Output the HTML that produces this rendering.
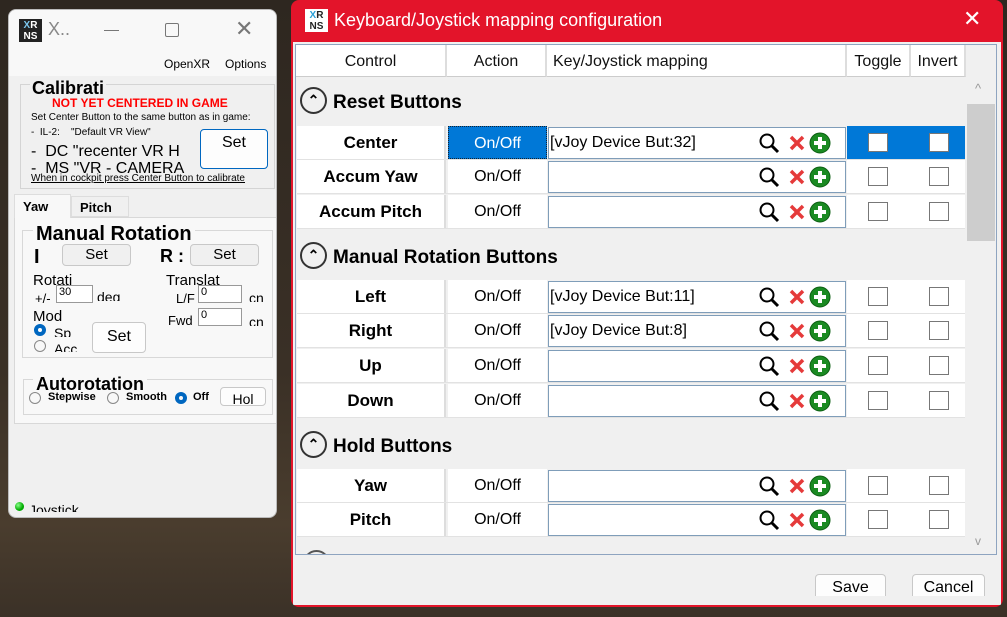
<!DOCTYPE html>
<html><head><meta charset="utf-8"><style>
*{margin:0;padding:0;box-sizing:border-box}
body{width:1007px;height:617px;overflow:hidden;position:relative;font-family:"Liberation Sans",sans-serif;background:linear-gradient(#2e2720 0%,#3a3026 60%,#4a3d2e 85%,#3b3127 100%)}
.a{position:absolute}
#lw{left:8px;top:9px;width:269px;height:509px;background:#f0f0f0;border-radius:8px;overflow:hidden;border:1px solid #bbb}
#dlg{left:291px;top:0;width:712px;height:607px;background:#e3142a;border-radius:8px;overflow:hidden}
#dc{left:2px;top:42px;width:708px;height:563px;background:#f0f0f0}
#grid{left:295px;top:44px;width:702px;height:511px;border:1px solid #8ea4c0;background:#f0f0f0;overflow:hidden}
.hd{position:absolute;top:0;height:32px;background:#fff;border-right:2px solid #ddd;border-bottom:1px solid #ccc;font-size:16px;line-height:33px;color:#111}
.row{position:absolute;left:1px;width:668px;height:34px}
.c1{position:absolute;left:0;top:0;width:149px;height:33px;background:#fff;border-right:2px solid #ddd;font-weight:bold;font-size:17px;text-align:center;line-height:33px}
.c2{position:absolute;left:151px;top:0;width:99px;height:33px;background:#fff;font-size:16px;text-align:center;line-height:33px}
.c3{position:absolute;left:251px;top:1px;width:298px;height:32px;background:#fff;border:1px solid #7f9db9;font-size:16px;line-height:30px;padding-left:1px}
.c4{position:absolute;left:550px;top:0;width:118px;height:33px;background:#fff}
.row::after{content:"";position:absolute;left:0;top:33px;width:668px;height:1px;background:#e2e2e2}
.cb{position:absolute;top:7px;width:20px;height:19px;border:1px solid #777;background:#fff}
.ic{position:absolute;left:209px;top:3px}
.sec{position:absolute;left:4px;font-size:19px;font-weight:bold;height:30px;line-height:30px}
.sec .ci{display:inline-block;width:27px;height:27px;border:2px solid #333;border-radius:50%;vertical-align:middle;margin-right:6px;text-align:center;line-height:22px;font-size:14px;position:relative;top:-2px}
.btn{position:absolute;background:#fdfdfd;border:1px solid #c8c8c8;border-radius:4px;text-align:center;font-size:16px}
</style></head><body>

<!-- left window -->
<div id="lw" class="a">
 <div class="a" style="left:0;top:0;width:269px;height:42px;background:#f8f8f8"></div>
 <div class="a" style="left:10px;top:9px;width:23px;height:23px;background:#222;font-size:10px;font-weight:bold;line-height:11px;color:#fff;text-align:center;padding-top:1px"><span style="color:#7cc7ee">X</span>R<br>NS</div>
 <div class="a" style="left:39px;top:9px;font-size:18px;color:#888">X..</div>
 <div class="a" style="left:95px;top:20px;width:15px;height:1px;background:#777"></div>
 <div class="a" style="left:156px;top:13px;width:14px;height:14px;border:1px solid #777;border-radius:2px"></div>
 <div class="a" style="left:226px;top:6px;font-size:22px;color:#777">✕</div>
 <div class="a" style="left:0;top:42px;width:269px;height:24px;background:#f8f8f8"></div>
 <div class="a" style="left:155px;top:47px;font-size:12px">OpenXR</div>
 <div class="a" style="left:216px;top:47px;font-size:12px">Options</div>
 <div class="a" style="left:11px;top:74px;width:255px;height:105px;border:1px solid #d4d4d4"></div>
 <div class="a" style="left:21px;top:68px;font-size:18px;font-weight:bold;height:17px;overflow:hidden;background:#f0f0f0;padding:0 2px">Calibrati</div>
 <div class="a" style="left:43px;top:86px;font-size:12px;font-weight:bold;color:#f00">NOT YET CENTERED IN GAME</div>
 <div class="a" style="left:22px;top:102px;font-size:10px">Set Center Button to the same button as in game:</div>
 <div class="a" style="left:22px;top:117px;font-size:10px">-&nbsp; IL-2:&nbsp;&nbsp;&nbsp; "Default VR View"</div>
 <div class="a" style="left:22px;top:133px;font-size:16px;height:14px;overflow:hidden;width:170px;white-space:nowrap">-&nbsp; DC "recenter VR H</div>
 <div class="a" style="left:22px;top:150px;font-size:16px;height:14px;overflow:hidden;width:170px;white-space:nowrap">-&nbsp; MS "VR - CAMERA</div>
 <div class="btn" style="left:191px;top:119px;width:68px;height:40px;border-color:#0067c0;line-height:26px">Set</div>
 <div class="a" style="left:22px;top:163px;font-size:10px;text-decoration:underline">When in cockpit press Center Button to calibrate</div>
 <div class="a" style="left:5px;top:207px;width:264px;height:207px;border:1px solid #d8d8d8;background:#f8f8f8"></div>
 <div class="a" style="left:5px;top:184px;width:57px;height:24px;background:#f8f8f8;border:1px solid #ddd;border-bottom:none;font-size:13px;font-weight:bold;padding:4px 0 0 8px">Yaw</div>
 <div class="a" style="left:62px;top:186px;width:58px;height:21px;border:1px solid #ddd;font-size:13px;font-weight:bold;padding:3px 0 0 8px">Pitch</div>
 <div class="a" style="left:13px;top:220px;width:251px;height:128px;border:1px solid #d8d8d8"></div>
 <div class="a" style="left:24px;top:213px;font-size:20px;font-weight:bold;background:#f8f8f8;padding:0 3px;height:20px;line-height:22px">Manual Rotation</div>
 <div class="a" style="left:25px;top:236px;font-size:20px;font-weight:bold;height:20px">I</div>
 <div class="btn" style="left:53px;top:234px;width:69px;height:22px;background:#f0f0f0;line-height:20px;font-size:15px">Set</div>
 <div class="a" style="left:151px;top:236px;font-size:18px;font-weight:bold">R :</div>
 <div class="btn" style="left:181px;top:234px;width:69px;height:22px;background:#f0f0f0;line-height:20px;font-size:15px">Set</div>
 <div class="a" style="left:24px;top:262px;font-size:15px;height:13px;overflow:hidden">Rotati</div>
 <div class="a" style="left:157px;top:262px;font-size:15px;height:13px;overflow:hidden">Translat</div>
 <div class="a" style="left:26px;top:281px;font-size:13px">+/-</div>
 <div class="a" style="left:47px;top:275px;width:37px;height:18px;background:#fff;border:1px solid #999;font-size:11px;padding-left:2px">30</div>
 <div class="a" style="left:88px;top:279px;font-size:14px;height:12px;overflow:hidden">deg</div>
 <div class="a" style="left:167px;top:281px;font-size:13px">L/F</div>
 <div class="a" style="left:189px;top:275px;width:44px;height:18px;background:#fff;border:1px solid #999;font-size:11px;padding-left:2px">0</div>
 <div class="a" style="left:240px;top:280px;font-size:14px;height:12px;overflow:hidden">cn</div>
 <div class="a" style="left:159px;top:303px;font-size:13px">Fwd</div>
 <div class="a" style="left:189px;top:298px;width:44px;height:18px;background:#fff;border:1px solid #999;font-size:11px;padding-left:2px">0</div>
 <div class="a" style="left:240px;top:304px;font-size:14px;height:12px;overflow:hidden">cn</div>
 <div class="a" style="left:24px;top:298px;font-size:15px;height:13px;overflow:hidden">Mod</div>
 <div class="a" style="left:25px;top:314px;width:12px;height:12px;border-radius:50%;border:4px solid #0067c0;background:#fff"></div>
 <div class="a" style="left:45px;top:315px;font-size:14px;height:12px;overflow:hidden">Sp</div>
 <div class="a" style="left:25px;top:330px;width:12px;height:12px;border-radius:50%;border:1px solid #888"></div>
 <div class="a" style="left:45px;top:331px;font-size:14px;height:11px;overflow:hidden">Acc</div>
 <div class="btn" style="left:83px;top:312px;width:54px;height:31px;line-height:28px">Set</div>
 <div class="a" style="left:14px;top:369px;width:250px;height:36px;border:1px solid #d8d8d8"></div>
 <div class="a" style="left:24px;top:364px;font-size:18px;font-weight:bold;background:#f8f8f8;padding:0 3px;height:18px;line-height:20px">Autorotation</div>
 <div class="a" style="left:20px;top:382px;width:12px;height:12px;border-radius:50%;border:1px solid #888"></div>
 <div class="a" style="left:39px;top:381px;font-size:11px;font-weight:bold">Stepwise</div>
 <div class="a" style="left:98px;top:382px;width:12px;height:12px;border-radius:50%;border:1px solid #888"></div>
 <div class="a" style="left:117px;top:381px;font-size:11px;font-weight:bold">Smooth</div>
 <div class="a" style="left:166px;top:382px;width:12px;height:12px;border-radius:50%;border:4px solid #0067c0"></div>
 <div class="a" style="left:184px;top:381px;font-size:11px;font-weight:bold">Off</div>
 <div class="btn" style="left:211px;top:377px;width:46px;height:19px;font-size:14px;line-height:22px;overflow:hidden">Hol</div>
 <div class="a" style="left:6px;top:492px;width:9px;height:9px;border-radius:50%;background:radial-gradient(circle at 35% 35%,#8f8,#0a0 60%)"></div>
 <div class="a" style="left:20px;top:492px;font-size:14px;height:10px;overflow:hidden">Joystick</div>
</div>

<!-- dialog -->
<div id="dlg" class="a">
 <div class="a" style="left:14px;top:9px;width:23px;height:23px;background:#fff;font-size:10px;font-weight:bold;line-height:11px;color:#222;text-align:center;padding-top:1px"><span style="color:#2a9fd6">X</span>R<br>NS</div>
 <div class="a" style="left:43px;top:10px;font-size:18px;color:#fff">Keyboard/Joystick mapping configuration</div>
 <div class="a" style="left:672px;top:6px;font-size:22px;color:#fff">✕</div>
 <div id="dc" class="a"></div>
</div>
<div id="grid" class="a">
 <div class="hd" style="left:0;width:151px;text-align:center">Control</div>
 <div class="hd" style="left:151px;width:100px;text-align:center">Action</div>
 <div class="hd" style="left:251px;width:300px;padding-left:6px">Key/Joystick mapping</div>
 <div class="hd" style="left:551px;width:64px;text-align:center">Toggle</div>
 <div class="hd" style="left:615px;width:55px;text-align:center">Invert</div>
 <div class="a" style="left:670px;top:0;width:30px;height:32px;background:#f0f0f0"></div>
 <div class="a" style="left:670px;top:32px;width:30px;height:478px;background:#f0f0f0"></div>
 <div class="a" style="left:671px;top:59px;width:28px;height:137px;background:#cdcdcd"></div>
 <div class="a" style="left:679px;top:36px;font-size:13px;color:#999">^</div>
 <div class="a" style="left:679px;top:489px;font-size:12px;color:#999">v</div>

 <div class="sec" style="top:43px"><span class="ci">⌃</span>Reset Buttons</div>
 <div class="row" style="top:81px"><div class="c1">Center</div><div class="c2" style="background:#0078d7;color:#fff;border:1px dotted #123">On/Off</div><div class="c3">[vJoy Device But:32]<svg class="ic" width="80" height="26"><circle cx="9" cy="10" r="6.5" fill="none" stroke="#000" stroke-width="2"/><path d="M14 15l6 6" stroke="#000" stroke-width="3"/><path d="M33 6l12 12M45 6l-12 12" stroke="#e53a3a" stroke-width="3.5"/><circle cx="62" cy="12" r="10" fill="#1a8a22" stroke="#0c5e12" stroke-width="1"/><path d="M62 6v12M56 12h12" stroke="#fff" stroke-width="4"/></svg></div><div class="c4" style="background:#0078d7"><div class="cb" style="left:21px"></div><div class="cb" style="left:82px"></div></div></div>
 <div class="row" style="top:115px"><div class="c1">Accum Yaw</div><div class="c2">On/Off</div><div class="c3"><svg class="ic" width="80" height="26"><circle cx="9" cy="10" r="6.5" fill="none" stroke="#000" stroke-width="2"/><path d="M14 15l6 6" stroke="#000" stroke-width="3"/><path d="M33 6l12 12M45 6l-12 12" stroke="#e53a3a" stroke-width="3.5"/><circle cx="62" cy="12" r="10" fill="#1a8a22" stroke="#0c5e12" stroke-width="1"/><path d="M62 6v12M56 12h12" stroke="#fff" stroke-width="4"/></svg></div><div class="c4"><div class="cb" style="left:21px"></div><div class="cb" style="left:82px"></div></div></div>
 <div class="row" style="top:150px"><div class="c1">Accum Pitch</div><div class="c2">On/Off</div><div class="c3"><svg class="ic" width="80" height="26"><circle cx="9" cy="10" r="6.5" fill="none" stroke="#000" stroke-width="2"/><path d="M14 15l6 6" stroke="#000" stroke-width="3"/><path d="M33 6l12 12M45 6l-12 12" stroke="#e53a3a" stroke-width="3.5"/><circle cx="62" cy="12" r="10" fill="#1a8a22" stroke="#0c5e12" stroke-width="1"/><path d="M62 6v12M56 12h12" stroke="#fff" stroke-width="4"/></svg></div><div class="c4"><div class="cb" style="left:21px"></div><div class="cb" style="left:82px"></div></div></div>

 <div class="sec" style="top:198px"><span class="ci">⌃</span>Manual Rotation Buttons</div>
 <div class="row" style="top:235px"><div class="c1">Left</div><div class="c2">On/Off</div><div class="c3">[vJoy Device But:11]<svg class="ic" width="80" height="26"><circle cx="9" cy="10" r="6.5" fill="none" stroke="#000" stroke-width="2"/><path d="M14 15l6 6" stroke="#000" stroke-width="3"/><path d="M33 6l12 12M45 6l-12 12" stroke="#e53a3a" stroke-width="3.5"/><circle cx="62" cy="12" r="10" fill="#1a8a22" stroke="#0c5e12" stroke-width="1"/><path d="M62 6v12M56 12h12" stroke="#fff" stroke-width="4"/></svg></div><div class="c4"><div class="cb" style="left:21px"></div><div class="cb" style="left:82px"></div></div></div>
 <div class="row" style="top:269px"><div class="c1">Right</div><div class="c2">On/Off</div><div class="c3">[vJoy Device But:8]<svg class="ic" width="80" height="26"><circle cx="9" cy="10" r="6.5" fill="none" stroke="#000" stroke-width="2"/><path d="M14 15l6 6" stroke="#000" stroke-width="3"/><path d="M33 6l12 12M45 6l-12 12" stroke="#e53a3a" stroke-width="3.5"/><circle cx="62" cy="12" r="10" fill="#1a8a22" stroke="#0c5e12" stroke-width="1"/><path d="M62 6v12M56 12h12" stroke="#fff" stroke-width="4"/></svg></div><div class="c4"><div class="cb" style="left:21px"></div><div class="cb" style="left:82px"></div></div></div>
 <div class="row" style="top:304px"><div class="c1">Up</div><div class="c2">On/Off</div><div class="c3"><svg class="ic" width="80" height="26"><circle cx="9" cy="10" r="6.5" fill="none" stroke="#000" stroke-width="2"/><path d="M14 15l6 6" stroke="#000" stroke-width="3"/><path d="M33 6l12 12M45 6l-12 12" stroke="#e53a3a" stroke-width="3.5"/><circle cx="62" cy="12" r="10" fill="#1a8a22" stroke="#0c5e12" stroke-width="1"/><path d="M62 6v12M56 12h12" stroke="#fff" stroke-width="4"/></svg></div><div class="c4"><div class="cb" style="left:21px"></div><div class="cb" style="left:82px"></div></div></div>
 <div class="row" style="top:339px"><div class="c1">Down</div><div class="c2">On/Off</div><div class="c3"><svg class="ic" width="80" height="26"><circle cx="9" cy="10" r="6.5" fill="none" stroke="#000" stroke-width="2"/><path d="M14 15l6 6" stroke="#000" stroke-width="3"/><path d="M33 6l12 12M45 6l-12 12" stroke="#e53a3a" stroke-width="3.5"/><circle cx="62" cy="12" r="10" fill="#1a8a22" stroke="#0c5e12" stroke-width="1"/><path d="M62 6v12M56 12h12" stroke="#fff" stroke-width="4"/></svg></div><div class="c4"><div class="cb" style="left:21px"></div><div class="cb" style="left:82px"></div></div></div>

 <div class="sec" style="top:387px"><span class="ci">⌃</span>Hold Buttons</div>
 <div class="row" style="top:424px"><div class="c1">Yaw</div><div class="c2">On/Off</div><div class="c3"><svg class="ic" width="80" height="26"><circle cx="9" cy="10" r="6.5" fill="none" stroke="#000" stroke-width="2"/><path d="M14 15l6 6" stroke="#000" stroke-width="3"/><path d="M33 6l12 12M45 6l-12 12" stroke="#e53a3a" stroke-width="3.5"/><circle cx="62" cy="12" r="10" fill="#1a8a22" stroke="#0c5e12" stroke-width="1"/><path d="M62 6v12M56 12h12" stroke="#fff" stroke-width="4"/></svg></div><div class="c4"><div class="cb" style="left:21px"></div><div class="cb" style="left:82px"></div></div></div>
 <div class="row" style="top:458px"><div class="c1">Pitch</div><div class="c2">On/Off</div><div class="c3"><svg class="ic" width="80" height="26"><circle cx="9" cy="10" r="6.5" fill="none" stroke="#000" stroke-width="2"/><path d="M14 15l6 6" stroke="#000" stroke-width="3"/><path d="M33 6l12 12M45 6l-12 12" stroke="#e53a3a" stroke-width="3.5"/><circle cx="62" cy="12" r="10" fill="#1a8a22" stroke="#0c5e12" stroke-width="1"/><path d="M62 6v12M56 12h12" stroke="#fff" stroke-width="4"/></svg></div><div class="c4"><div class="cb" style="left:21px"></div><div class="cb" style="left:82px"></div></div></div>
 <div class="a" style="left:7px;top:505px;width:27px;height:27px;border:2px solid #555;border-radius:50%"></div>
</div>
<div class="btn" style="left:815px;top:574px;width:71px;height:22px;line-height:26px;overflow:hidden;border-bottom:none;border-radius:4px 4px 0 0">Save</div>
<div class="btn" style="left:912px;top:574px;width:73px;height:22px;line-height:26px;overflow:hidden;border-bottom:none;border-radius:4px 4px 0 0">Cancel</div>
</body></html>
